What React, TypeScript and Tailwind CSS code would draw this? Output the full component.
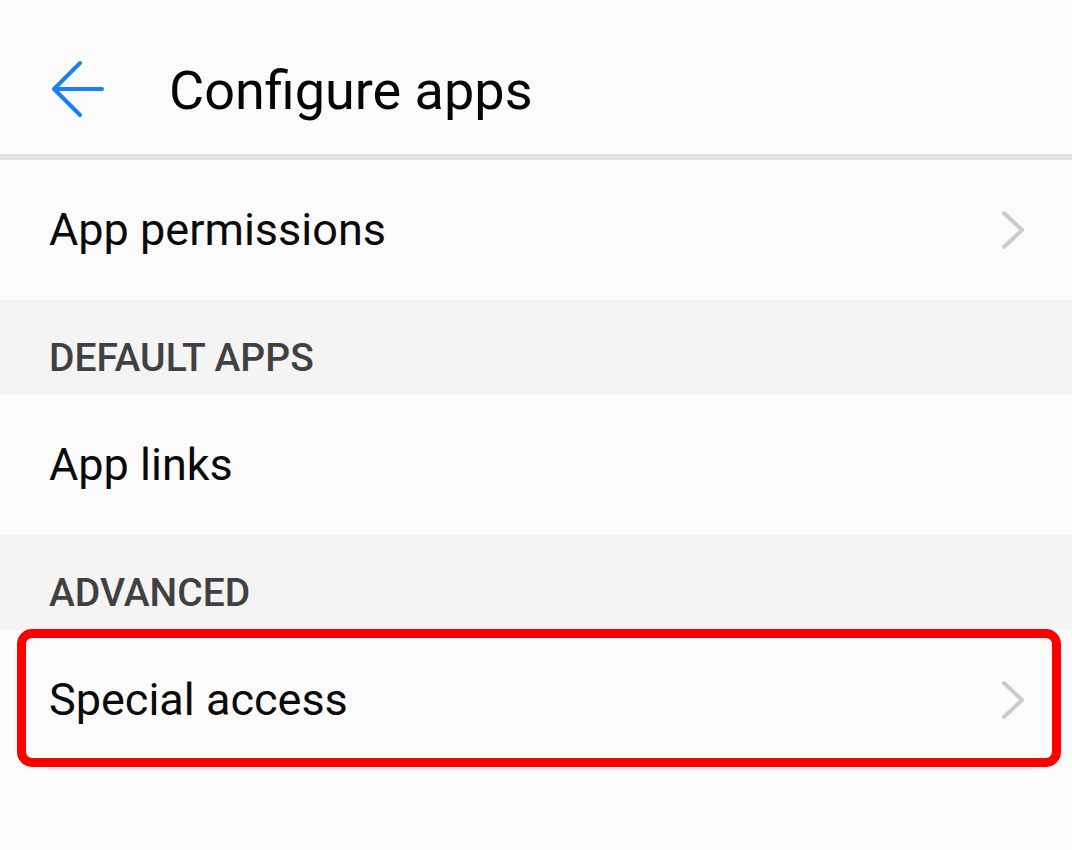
import React from 'react';

const font = { fontFamily: 'Roboto, "Noto Sans", sans-serif' };

const Chevron: React.FC = () => (
  <svg width="26" height="42" viewBox="0 0 26 42" fill="none" className="shrink-0">
    <path d="M4 4 L22 21 L4 38" stroke="#cbcbcb" strokeWidth="4" strokeLinecap="round" strokeLinejoin="round" />
  </svg>
);

const Row: React.FC<{ label: string; chevron?: boolean }> = ({ label, chevron }) => (
  <div className="h-[140px] flex items-center justify-between pl-[49px] pr-[46px]">
    <span className="text-[45px] leading-[52px] text-[#0a0a0a]">{label}</span>
    {chevron && <Chevron />}
  </div>
);

const Section: React.FC<{ title: string }> = ({ title }) => (
  <div className="h-[95px] bg-[#f4f4f4] pl-[49px] pt-[36px]">
    <span className="text-[39px] leading-[44px] font-medium text-[#404040]">{title}</span>
  </div>
);

export default function App() {
  return (
    <div className="w-[1072px] h-[850px] bg-[#fbfbfb] overflow-hidden" style={font}>
      {/* Header */}
      <div className="h-[154px] flex items-center pt-[28px]">
        <svg width="60" height="60" viewBox="0 0 60 60" fill="none" className="ml-[48px] -mt-[6px]">
          <path d="M6 31 H54 M32 5 L6 31 L32 57" stroke="#1b7ff4" strokeWidth="4" strokeLinecap="round" strokeLinejoin="round" />
        </svg>
        <h1 className="ml-[61px] text-[54px] leading-[60px] text-[#050505]">Configure apps</h1>
      </div>
      <div className="h-[6px] bg-[#e2e2e2]" />

      <Row label="App permissions" chevron />
      <Section title="DEFAULT APPS" />
      <Row label="App links" />
      <Section title="ADVANCED" />

      <div className="relative">
        <Row label="Special access" chevron />
        <div className="ml-[48px] mr-[40px] h-[2px] bg-[#e6e6e6] -mt-[2px]" />
        {/* highlight */}
        <div className="absolute left-[17px] top-[-1px] w-[1044px] h-[138px] border-[9px] border-[#ff0000] rounded-[15px]" />
      </div>
    </div>
  );
}
